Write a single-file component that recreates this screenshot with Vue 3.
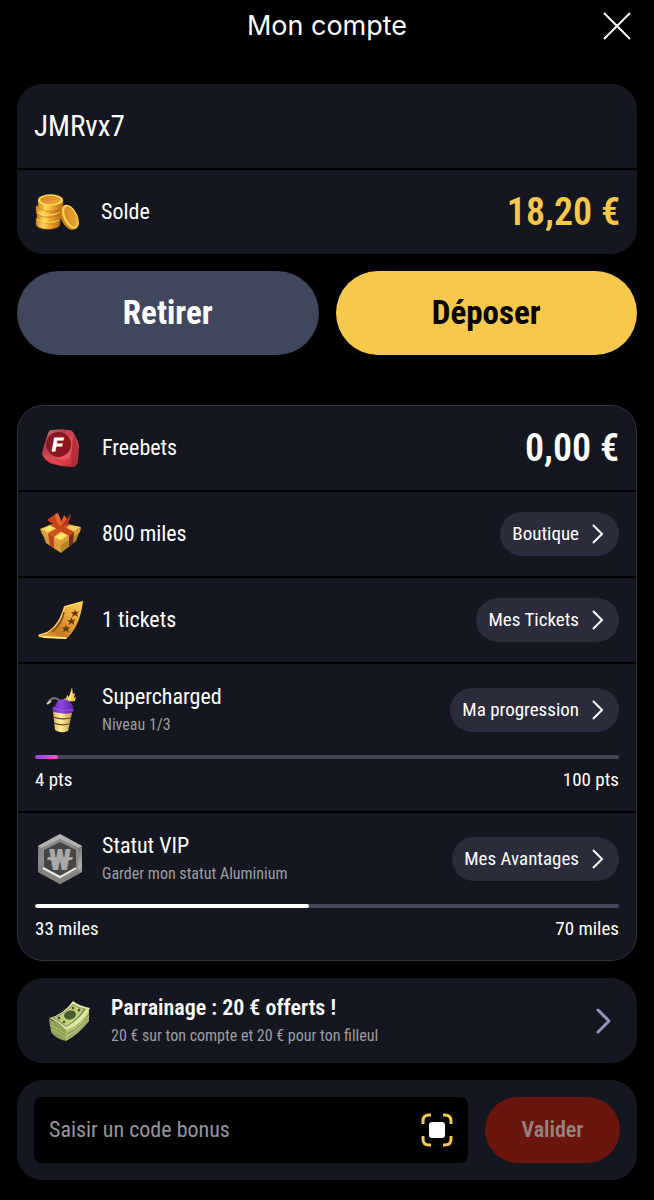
<script setup>
import { ref } from 'vue'

const bonusCode = ref('')
</script>

<template>
  <main class="page">
    <header class="header">
      <h1>Mon compte</h1>
      <button class="close" type="button" aria-label="Fermer">
        <svg width="28" height="28" viewBox="0 0 28 28"><path d="M1 1 27 27M27 1 1 27" fill="none" stroke="#fff" stroke-width="2" /></svg>
      </button>
    </header>

    <section class="card">
      <div class="row name">JMRvx7</div>
      <div class="row balance">
        <svg class="icon" viewBox="0 0 50 50">
          <defs>
            <linearGradient id="coinSide" x1="0" x2="1"><stop offset="0" stop-color="#d08a1c" /><stop offset=".3" stop-color="#ffd75a" /><stop offset=".6" stop-color="#eba02a" /><stop offset="1" stop-color="#b56a12" /></linearGradient>
            <linearGradient id="coinTop" x1="0" y1="0" x2="1" y2="1"><stop offset="0" stop-color="#cf7f20" /><stop offset="1" stop-color="#f2ad3c" /></linearGradient>
          </defs>
          <g fill="url(#coinSide)" stroke="#9a5a12" stroke-width=".4">
            <path d="M2 31v6c0 7 24 7 24 0v-6z" />
            <path d="M3 25v6c0 7 24 7 24 0v-6z" />
            <path d="M2 19v6c0 7 24 7 24 0v-6z" />
            <path d="M4 13v6c0 7 25 7 25 0v-6z" />
          </g>
          <path d="M3 32c3 4 17 5 22 1M4 25c4 4 17 4 22 0" fill="none" stroke="#ffe05c" stroke-width="1" />
          <ellipse cx="16.500" cy="13" rx="12.500" ry="5.800" fill="#ffdc51" />
          <ellipse cx="16.500" cy="13" rx="10.300" ry="4.200" fill="url(#coinTop)" />
          <g transform="rotate(-26 36 30)">
            <ellipse cx="34" cy="30" rx="7" ry="13" fill="#c97c1a" />
            <ellipse cx="36.500" cy="30" rx="7" ry="13" fill="#ffd34c" />
            <ellipse cx="37" cy="30" rx="5.200" ry="11" fill="url(#coinTop)" />
          </g>
        </svg>
        <span class="label">Solde</span>
        <strong class="amount gold">18,20 €</strong>
      </div>
    </section>

    <div class="actions">
      <button class="action withdraw" type="button">Retirer</button>
      <button class="action deposit" type="button">Déposer</button>
    </div>

    <section class="card rewards">
      <div class="row">
        <svg class="icon" viewBox="0 0 50 50">
          <defs>
            <linearGradient id="diceSide" x1="0" y1="0" x2="1" y2="1"><stop offset="0" stop-color="#e8454d" /><stop offset=".7" stop-color="#e0414a" /><stop offset="1" stop-color="#a32731" /></linearGradient>
            <linearGradient id="diceTop" x1="0" y1="0" x2="1" y2="1"><stop offset="0" stop-color="#a98791" /><stop offset=".35" stop-color="#b93b47" /><stop offset="1" stop-color="#f0616a" /></linearGradient>
          </defs>
          <path d="M17 7q10-1 17 0 3 0 5 4 4 7 5 12l-1 15q-1 6-6 6-10 0-19-3-4-1-7-4-3-3-4-6 3-12 6-20 1-4 4-4z" fill="url(#diceSide)" />
          <path d="M38 12q5 7 5 12l-1 13q-1 5-5 6l-1-8z" fill="#a92c37" opacity=".75" />
          <path d="M17 7q10-1 16 0 6 0 5 6l-2 17q-1 6-6 6-9 1-17-2-6-1-5-6l5-17q1-4 4-4z" fill="url(#diceTop)" />
          <ellipse cx="23.500" cy="21.500" rx="12.500" ry="12.500" fill="#8a1720" />
          <text class="dice-letter" x="17" y="28">F</text>
        </svg>
        <span class="label">Freebets</span>
        <strong class="amount">0,00 €</strong>
      </div>

      <div class="row">
        <svg class="icon" viewBox="0 0 50 50">
          <path d="m6 21 20 11v12L11 34z" fill="#d99a38" />
          <path d="m26 32 20-13-5 13-15 12z" fill="#b98426" />
          <path d="m5 20 17-7 24 5-20 14z" fill="#f7cb55" />
          <path d="m5 20 21 12v4L7 25z" fill="#e5a23c" /><path d="m26 32 20-14-1 5-19 13z" fill="#dca335" />
          <path d="m13 24 6 4v11l-4-2z" fill="#b9451d" /><path d="m34 27 5-4-1 12-4 3z" fill="#7c2a24" />
          <path d="m13 24 16-9 6 1-16 12z" fill="#cf551f" /><path d="m15 16 6-3 18 10-5 4z" fill="#c4471a" />
          <path d="M26 16C17 15 11 12 13 10l8-5c2-1 5 7 5 11z" fill="#c8431a" />
          <path d="m20 5 3-1 5 12-3 1c-3-3-5-8-5-12z" fill="#e9683a" />
          <path d="m25 16 4-10 3 4 4-5-4 12z" fill="#e65d25" /><path d="m26 17 10-12-3 11z" fill="#ae3514" />
          <path d="m9 20 6-3 4 2-7 4zM20 28l7-4 4 2-6 5z" fill="#ffe66b" />
        </svg>
        <span class="label">800 miles</span>
        <button class="pill" type="button">Boutique<svg width="12" height="20" viewBox="0 0 12 20"><path d="m1 1 9 9-9 9" /></svg></button>
      </div>

      <div class="row">
        <svg class="icon" viewBox="0 0 50 50">
          <defs><linearGradient id="ticket" x1="1" y1="0" x2="0" y2="1"><stop offset="0" stop-color="#ffd75a" /><stop offset=".4" stop-color="#e3a238" /><stop offset=".7" stop-color="#c97824" /><stop offset="1" stop-color="#f2bb48" /></linearGradient></defs>
          <path d="M3 40q19-3 26-29l19-5q-3 26-17 38L4 42z" fill="url(#ticket)" />
          <path d="M4 40q18-2 26-28l17-5" fill="none" stroke="#ffe176" stroke-width="1" />
          <path d="M29 17q-2 12-12 20" fill="none" stroke="#865016" stroke-width="1.600" />
          <path d="m4 41 24 1q3 0 4 1l-1 1-22-1z" fill="#ffe885" />
          <g fill="#693714"><path id="star" d="m40 14 1 3 3-1-2 3 1 3-3-2-3 2 1-3-2-2h3z" /><use href="#star" x="-3.500" y="8" /><use href="#star" x="-9" y="15.500" /></g>
        </svg>
        <span class="label">1 tickets</span>
        <button class="pill" type="button">Mes Tickets<svg width="12" height="20" viewBox="0 0 12 20"><path d="m1 1 9 9-9 9" /></svg></button>
      </div>

      <div class="progress-row">
        <div class="progress-head">
          <svg class="icon" viewBox="0 0 50 50">
            <defs><linearGradient id="cup"><stop offset="0" stop-color="#dcb458" /><stop offset=".4" stop-color="#fff09b" /><stop offset="1" stop-color="#c39a4a" /></linearGradient><linearGradient id="lid"><stop offset="0" stop-color="#6625b4" /><stop offset=".4" stop-color="#8d45dc" /><stop offset="1" stop-color="#5a20a6" /></linearGradient></defs>
            <path d="M13 18c3-6 8-6 12-2" fill="none" stroke="#78777b" stroke-width="1.800" /><path d="m12 19 4-3" stroke="#d8d3c5" stroke-width="2" />
            <path d="m37 2 1 7 2-1-1 5 2-1-1 4-10 1-1-4 2 1 1-4 2 2z" fill="#f5c84f" /><path d="m37 6-1 10-3-2z" fill="#fff08a" />
            <path d="m18 26 19 2-4 18q-7 3-13-1z" fill="url(#cup)" />
            <path d="m18 32q8 3 18 1M19 38q7 3 15 1" fill="none" stroke="#624620" stroke-width="1.200" />
            <path d="M20 21q2-6 8-7 8 1 10 8l1 4q-4 5-20 1-3-2-1-5z" fill="url(#lid)" /><path d="M18 23q9 4 20 2" fill="none" stroke="#a05af0" stroke-width="1" />
          </svg>
          <div class="copy"><span class="label">Supercharged</span><small>Niveau 1/3</small></div>
          <button class="pill" type="button">Ma progression<svg width="12" height="20" viewBox="0 0 12 20"><path d="m1 1 9 9-9 9" /></svg></button>
        </div>
        <div class="track" role="progressbar" aria-label="Supercharged" aria-valuenow="4" aria-valuemax="100"><div class="fill points"></div></div>
        <div class="scale"><span>4 pts</span><span>100 pts</span></div>
      </div>

      <div class="progress-row">
        <div class="progress-head">
          <svg class="icon" viewBox="0 0 50 50">
            <defs><linearGradient id="metal" x1="0" y1="0" x2="1" y2="1"><stop offset="0" stop-color="#777" /><stop offset=".3" stop-color="#8d8c8a" /><stop offset=".55" stop-color="#666" /><stop offset=".8" stop-color="#b0aeaa" /><stop offset="1" stop-color="#666" /></linearGradient></defs>
            <path d="m25 0 22 12v26L25 50 3 38V12z" fill="url(#metal)" />
            <path d="m25 0 22 12-4 2L25 5 7 14l-4-2z" fill="#b2b1ae" />
            <path d="m3 38 4-2 18 9 18-9 4 2-22 12z" fill="#85837f" />
            <path d="m25 5 18 9v22l-18 9-18-9V14z" fill="#8a8987" />
            <path d="m25 8 16 8v18l-16 9-16-9V16z" fill="#454545" />
            <path d="m8 34 17 9 16-9" fill="none" stroke="#ecebe8" stroke-width="2" />
            <text class="metal-letter" x="25" y="36" text-anchor="middle">W</text>
            <path d="M13 23h25l-1 3H12z" fill="#aaa9a7" />
          </svg>
          <div class="copy"><span class="label">Statut VIP</span><small>Garder mon statut Aluminium</small></div>
          <button class="pill" type="button">Mes Avantages<svg width="12" height="20" viewBox="0 0 12 20"><path d="m1 1 9 9-9 9" /></svg></button>
        </div>
        <div class="track" role="progressbar" aria-label="Statut VIP" aria-valuenow="33" aria-valuemax="70"><div class="fill miles"></div></div>
        <div class="scale"><span>33 miles</span><span>70 miles</span></div>
      </div>
    </section>

    <a class="card referral" href="#parrainage">
      <svg class="icon" viewBox="0 0 50 50">
        <path d="M6 23q10 3 17 10v12Q13 43 8 36z" fill="#8fa154" /><path d="M23 33q16-6 23-21v13Q36 38 23 45z" fill="#b5c276" />
        <path d="M7 29q9 3 16 10M8 33q8 3 15 9" fill="none" stroke="#b3c274" stroke-width="1" />
        <path d="M24 38q14-6 22-20M24 42q14-7 22-20" fill="none" stroke="#7e9049" stroke-width="1" />
        <path d="M6 22Q20 19 30 5q6 5 17 7-7 16-24 22-7-8-17-12z" fill="#e2e8ac" />
        <path d="M9 22q12-4 21-14 6 4 13 5-8 12-20 18-7-6-14-9z" fill="#75864a" />
        <path d="M11 22q11-4 19-13 5 3 11 4-7 11-18 17-5-5-12-8z" fill="#c3cf7d" />
        <ellipse cx="27" cy="19" rx="6" ry="4.500" transform="rotate(-15 27 19)" fill="#485b31" /><circle cx="16" cy="22" r="1.500" fill="#485b31" /><circle cx="36" cy="14" r="1.500" fill="#485b31" /><circle cx="21" cy="26" r="1.300" fill="#485b31" /><circle cx="30" cy="12" r="1.300" fill="#485b31" />
      </svg>
      <span class="copy"><strong>Parrainage : 20 € offerts !</strong><small>20 € sur ton compte et 20 € pour ton filleul</small></span>
      <svg class="chevron" width="16" height="26" viewBox="0 0 16 26"><path d="m3 2 11 11L3 24" /></svg>
    </a>

    <form class="card bonus" @submit.prevent>
      <div class="field">
        <input v-model="bonusCode" type="text" aria-label="Saisir un code bonus" placeholder="Saisir un code bonus">
        <button class="scan" type="button" aria-label="Scanner un code">
          <svg width="32" height="34" viewBox="0 0 32 34"><path d="M2 11V8q0-6 6-6h2m12 0h2q6 0 6 6v3m0 12v3q0 6-6 6h-2m-12 0H8q-6 0-6-6v-3" fill="none" stroke="#f7c84b" stroke-width="3" /><rect x="8" y="9" width="16" height="16" rx="3" fill="#fff" /></svg>
        </button>
      </div>
      <button class="submit" type="submit">Valider</button>
    </form>
  </main>
</template>

<style>
body { background: #000; }
</style>

<style scoped>
* { box-sizing: border-box; }
.page { padding: 0 17px 20px; color: #fff; background: #000; font-family: "Roboto Condensed", "Arial Narrow", "Liberation Sans", sans-serif; line-height: 28px; }
button, input { font: inherit; }
button { border: 0; padding: 0; cursor: pointer; }
svg { display: block; flex: none; }
.header { display: grid; grid-template-columns: 40px 1fr 40px; align-items: center; height: 52px; margin-bottom: 32px; }
h1 { grid-column: 2; margin: 0; text-align: center; font: 400 27px/36px Inter, sans-serif; }
.close { display: flex; justify-content: center; align-items: center; height: 40px; background: none; }
.card { background: #14171f; border-radius: 26px; }
.row { display: flex; align-items: center; min-height: 84px; padding: 0 17px; }
.row + .row, .row + .progress-row, .progress-row + .progress-row { border-top: 2px solid #000; }
.name { font-size: 29px; }
.balance { min-height: 86px; }
.icon { width: 50px; height: 50px; }
.label { display: block; font-size: 22px; margin-left: 17px; }
.amount { margin-left: auto; font-size: 38px; font-weight: 600; line-height: 48px; }
.gold { color: #f7c84b; }
.actions { display: grid; grid-template-columns: 1fr 1fr; gap: 17px; margin: 17px 0 50px; }
.action { height: 84px; border-radius: 42px; font-size: 33px; font-weight: 700; color: #fff; background: #40465c; }
.deposit { background: #f7c84b; color: #000; }
.rewards { border: 1px solid #30323c; }
.rewards .row + .row { min-height: 86px; }
.pill { display: flex; align-items: center; gap: 13px; height: 44px; margin-left: auto; padding: 0 15px 0 12px; border-radius: 22px; background: #2a2c3c; color: #fff; font-size: 19px; white-space: nowrap; }
.pill path { fill: none; stroke: #fff; stroke-width: 2; }
.progress-row { padding: 17px; }
.progress-head { display: flex; align-items: center; min-height: 58px; }
.copy { display: flex; flex-direction: column; padding-top: 2px; }
small { font-size: 16px; color: #9c9da3; }
.progress-head small { margin-left: 17px; }
.track { height: 4px; margin: 16px 0 7px; border-radius: 2px; background: #454657; overflow: hidden; }
.fill { height: 100%; border-radius: 2px; }
.points { width: 4%; background: linear-gradient(90deg, #8e45e7, #f05abf); }
.miles { width: 47%; background: #fff; }
.scale { display: flex; justify-content: space-between; font-size: 19px; }
.referral { display: flex; align-items: center; min-height: 85px; margin: 17px 0; padding: 0 26px; color: inherit; text-decoration: none; }
.referral .copy { margin-left: 18px; }
.referral strong { font-size: 22px; font-weight: 600; }
.chevron { margin-left: auto; }
.chevron path { fill: none; stroke: #8f94bb; stroke-width: 3; stroke-linecap: round; stroke-linejoin: round; }
.bonus { display: flex; gap: 17px; padding: 17px; }
.field { display: flex; flex: 1; align-items: center; min-width: 0; height: 66px; padding: 0 15px; border-radius: 8px; background: #000; }
input { flex: 1; min-width: 0; padding: 0; border: 0; outline: 0; color: #fff; background: none; font-size: 22px; }
input::placeholder { color: #96969b; opacity: 1; }
.scan { background: none; }
.submit { width: 135px; height: 66px; border-radius: 33px; color: #95837c; background: #6b150f; font-size: 22px; font-weight: 600; }
.dice-letter { font: italic 900 18px "Liberation Sans", sans-serif; fill: #fff; stroke: #fff; stroke-width: 1px; }
.metal-letter { font: 900 30px "Roboto Condensed", "Liberation Sans", sans-serif; fill: #aaa9a7; }
</style>
